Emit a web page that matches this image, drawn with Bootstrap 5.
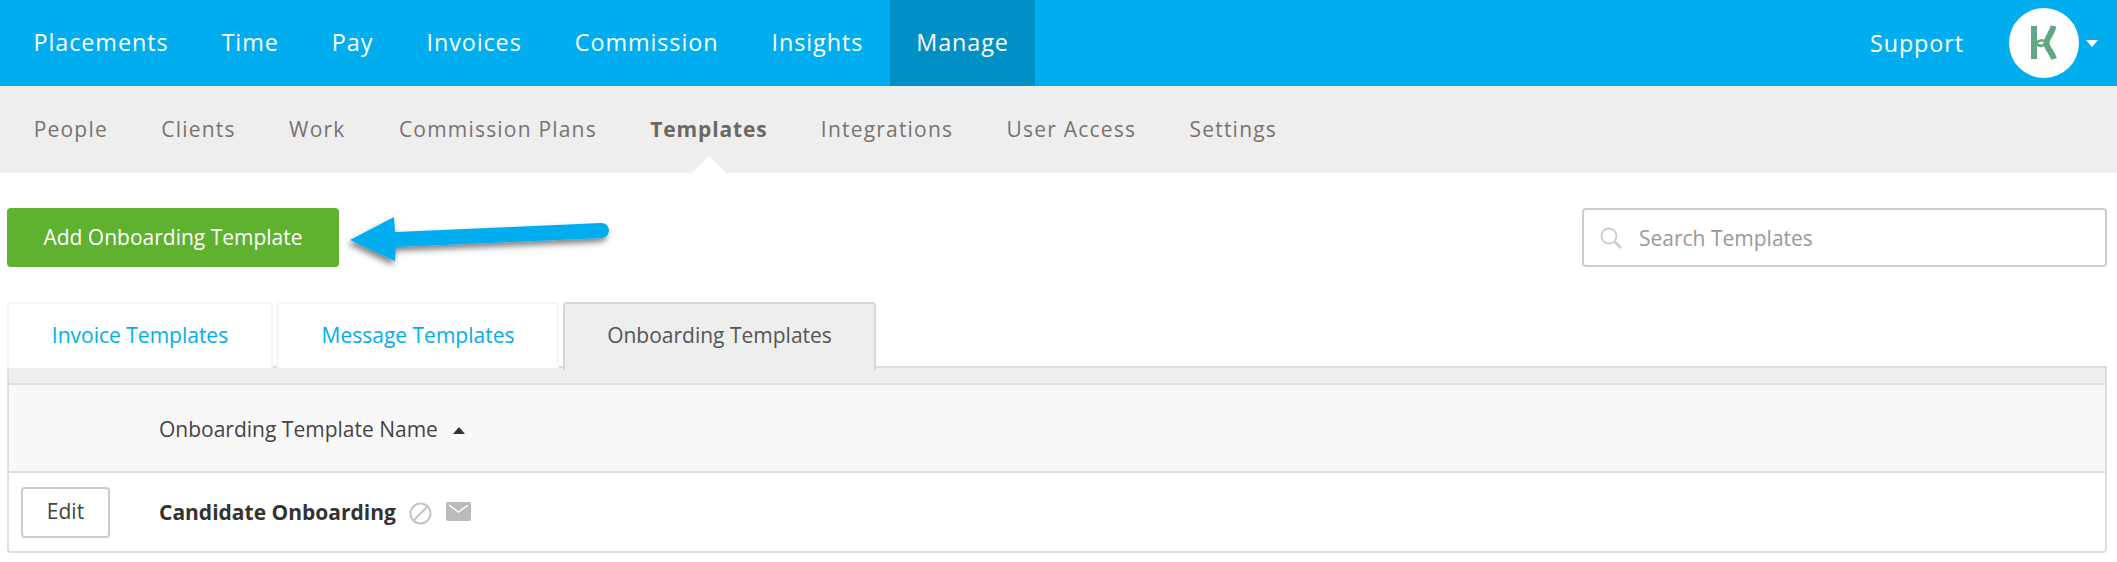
<!doctype html>
<html lang="en"><head><meta charset="utf-8"><title>Templates</title>
<link href="https://cdn.jsdelivr.net/npm/bootstrap@5.3.0/dist/css/bootstrap.min.css" rel="stylesheet">
<style>
body{font-family:"Open Sans",sans-serif;color:#333;background:#fff;overflow:hidden}
.topbar{background:#00aeef;height:86px;padding:0 7px}
.topbar .nav-link{color:#fff;font-size:23.4px;letter-spacing:.9px;padding:0 26.55px;height:86px;line-height:84px}
.topbar .nav-link.active{background:#0090c6}
.topbar .support-link{padding:0;height:auto;line-height:1.2}
.logo-circle{width:70px;height:70px;border-radius:50%;background:#fff;margin-left:45px}
.user-caret{width:0;height:0;border-left:6px solid transparent;border-right:6px solid transparent;border-top:7px solid #fff;margin:0 12px 0 7px}
.subbar{background:#eee;height:87px;padding:0 7px}
.subbar .nav-link{color:#79736f;font-size:21px;letter-spacing:1.2px;padding:0 26.7px;height:87px;line-height:87px;position:relative}
.subbar .nav-link.active{font-weight:700;color:#6d6763;letter-spacing:.85px}
.subbar .nav-link.active::after{content:"";position:absolute;left:50%;bottom:0;margin-left:-17px;border-left:17px solid transparent;border-right:17px solid transparent;border-bottom:17px solid #fff}
.pagebody{padding:35px 10px 0 7px}
.toolrow{height:59px}
.add-btn{background:#5fb130;border:0;color:#fff;font-size:21px;width:332px;height:59px;border-radius:4px}
.add-btn:hover{background:#5fb130;color:#fff}
.arrow-note{align-self:flex-start;margin-top:-3px}
.search-box{width:525px;height:59px;border:2px solid #ccc;border-radius:4px}
.search-box .form-control{border:0;background:transparent;font-size:21px;height:55px;padding:0 0 0 17px;box-shadow:none}
.search-box .form-control::placeholder{color:#999}
.search-ico{margin-left:16px}
.tabrow{margin-top:35px;border-bottom:0;gap:4px;position:relative;z-index:1}
.tabrow .nav-link{font-size:21px;height:66px;line-height:62px;padding:0;margin:0;color:#00aeef;background:#fff;border:2px solid #f5f5f5;border-bottom:0;border-radius:4px 4px 0 0;text-align:center}
.tabrow .nav-link.active{background:#eee;color:#555;border-color:#d6d6d6;height:68px;margin-bottom:-2px}
.tab-a{width:266px}.tab-b{width:282px}.tab-c{width:313px;margin-left:2px}
.panel{border:2px solid #ddd;border-radius:0 0 4px 4px;margin-top:-2px;background:#fff}
.band{height:17px;background:#eee;border-bottom:2px solid #ddd}
.tpl-table{margin:0;font-size:21px;--bs-table-color:#333;color:#333}
.tpl-table th,.tpl-table td{border:0;padding:0;vertical-align:middle}
.tpl-table thead th{background:#f8f8f8;height:87px;padding-top:3px;font-weight:400;border-bottom:2px solid #ddd;color:#444}
.tpl-table tbody td{height:79px}
.tpl-table tbody td.name-cell{padding-top:2px}
.col-edit{width:150px}
.edit-btn{width:89px;height:51px;margin-left:12px;border:2px solid #ccc;border-radius:4px;font-size:21px;color:#444;background:#fff;padding:0}
.sort-up{display:inline-block;width:0;height:0;border-left:6px solid transparent;border-right:6px solid transparent;border-bottom:7px solid #333;margin-left:15px;vertical-align:3px}
.tpl-name{font-weight:700}
.tpl-ico{vertical-align:-5px}
.tpl-mail{vertical-align:-1px}
</style></head><body>
<nav class="topbar d-flex align-items-center">
<ul class="nav flex-grow-1">
<li class="nav-item"><a class="nav-link" href="#">Placements</a></li>
<li class="nav-item"><a class="nav-link" href="#">Time</a></li>
<li class="nav-item"><a class="nav-link" href="#">Pay</a></li>
<li class="nav-item"><a class="nav-link" href="#">Invoices</a></li>
<li class="nav-item"><a class="nav-link" href="#">Commission</a></li>
<li class="nav-item"><a class="nav-link" href="#">Insights</a></li>
<li class="nav-item"><a class="nav-link active" href="#">Manage</a></li>
</ul>
<a class="nav-link support-link" href="#">Support</a>
<div class="logo-circle d-flex align-items-center justify-content-center">
<svg width="70" height="70" viewBox="0 0 70 70" fill="none" stroke="#62a784"><path d="M25 18v33" stroke-width="6"/><path d="M44.500 18C43 26 37.500 30 37.500 35 37.500 40 43 44 45 51" stroke-width="6"/><path d="M27 35.500c3.500-4 7-4.500 10.500-.500c-3.500 3.500-7 4-10.500 .500z" stroke-width="2.500"/></svg>
</div>
<div class="user-caret"></div>
</nav>
<nav class="subbar">
<ul class="nav">
<li class="nav-item"><a class="nav-link" href="#">People</a></li>
<li class="nav-item"><a class="nav-link" href="#">Clients</a></li>
<li class="nav-item"><a class="nav-link" href="#">Work</a></li>
<li class="nav-item"><a class="nav-link" href="#">Commission Plans</a></li>
<li class="nav-item"><a class="nav-link active" href="#">Templates</a></li>
<li class="nav-item"><a class="nav-link" href="#">Integrations</a></li>
<li class="nav-item"><a class="nav-link" href="#">User Access</a></li>
<li class="nav-item"><a class="nav-link" href="#">Settings</a></li>
</ul>
</nav>
<main class="pagebody">
<div class="d-flex align-items-center toolrow">
<button class="btn add-btn" type="button">Add Onboarding Template</button>
<svg class="arrow-note" width="280" height="70" viewBox="0 0 280 70"><defs><filter id="sh" x="-10%" y="-30%" width="125%" height="170%"><feDropShadow dx="-2" dy="4" stdDeviation="3" flood-color="#000" flood-opacity=".5"/></filter></defs><path d="M11 35 55 12 56 27 262 18a7.500 7.500 0 0 1 1 15L57 42 56 56z" fill="#00aeef" filter="url(#sh)"/></svg>
<div class="search-box d-flex align-items-center ms-auto">
<svg class="search-ico flex-shrink-0" width="22" height="22" viewBox="0 0 22 22" fill="none" stroke="#ccc"><circle cx="9" cy="9" r="7.500" stroke-width="1.800"/><path d="M14.500 14.500 21 21" stroke-width="2.500"/></svg>
<input class="form-control" type="text" placeholder="Search Templates">
</div>
</div>
<ul class="nav nav-tabs tabrow">
<li class="nav-item"><a class="nav-link tab-a" href="#">Invoice Templates</a></li>
<li class="nav-item"><a class="nav-link tab-b" href="#">Message Templates</a></li>
<li class="nav-item"><a class="nav-link active tab-c" href="#">Onboarding Templates</a></li>
</ul>
<div class="panel">
<div class="band"></div>
<table class="table tpl-table">
<thead><tr><th class="col-edit"></th><th>Onboarding Template Name<span class="sort-up"></span></th></tr></thead>
<tbody><tr><td><button class="btn edit-btn" type="button">Edit</button></td>
<td class="name-cell"><span class="tpl-name">Candidate Onboarding</span>
<svg class="tpl-ico ms-2" width="23" height="23" viewBox="0 0 23 23" fill="none" stroke="#c4c4c4" stroke-width="2"><circle cx="11.500" cy="11.500" r="10"/><path d="M5 18 18 5"/></svg>
<svg class="tpl-mail ms-2" width="25" height="19" viewBox="0 0 25 19"><rect width="25" height="19" rx="2" fill="#bbb"/><path d="M3 3 12.500 10 22 3" fill="none" stroke="#fff" stroke-width="1.500"/></svg>
</td></tr></tbody>
</table>
</div>
</main>
<script src="https://cdn.jsdelivr.net/npm/bootstrap@5.3.0/dist/js/bootstrap.bundle.min.js"></script>
</body></html>
